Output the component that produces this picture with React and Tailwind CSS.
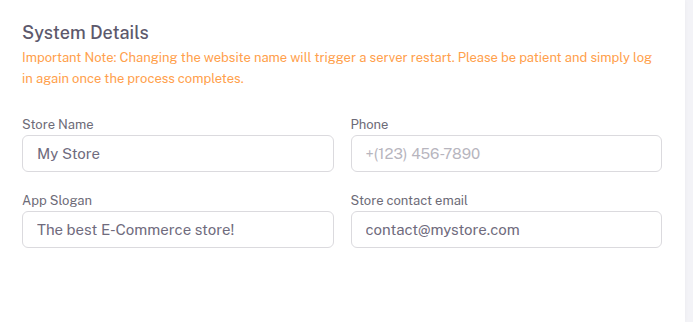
import React from 'react';

const Field = ({ label, value, placeholder }) => (
  <div className="flex flex-col">
    <label className="text-[13px] leading-[18px] text-[#6d6b77] mb-[1px]">{label}</label>
    <input
      type="text"
      defaultValue={value}
      placeholder={placeholder}
      className="h-[37px] w-full rounded-[6px] border border-[#dbdade] bg-white px-[14px] text-[15px] text-[#6f6b7d] placeholder:text-[#b7b5be] outline-none"
    />
  </div>
);

const App = () => {
  return (
    <div className="min-h-[322px] w-full bg-[#f3f3f7] font-['Public_Sans','Inter','Liberation_Sans',sans-serif]">
      <div className="h-[322px] w-[685px] bg-white pl-[22px] pr-[22px] pt-[20px] shadow-[0_0_4px_rgba(0,0,0,0.04)]">
        <h2 className="text-[18px] leading-[26px] font-medium text-[#5d596c]">System Details</h2>
        <p className="mt-[1px] text-[13px] leading-[21px] text-[#ffa04b]">
          Important Note: Changing the website name will trigger a server restart. Please be patient and simply log in again once the process completes.
        </p>

        <div className="mt-[27px] grid grid-cols-2 gap-x-[17px] gap-y-[20px] w-[640px]">
          <Field label="Store Name" value="My Store" />
          <Field label="Phone" placeholder="+(123) 456-7890" />
          <Field label="App Slogan" value="The best E-Commerce store!" />
          <Field label="Store contact email" value="contact@mystore.com" />
        </div>
      </div>
    </div>
  );
};

export default App;
